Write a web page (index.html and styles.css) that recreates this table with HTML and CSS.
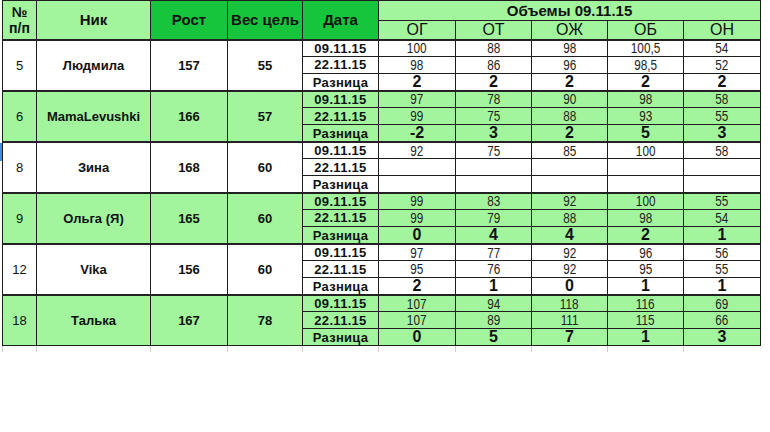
FILE: index.html
```html
<!DOCTYPE html>
<html lang="ru">
<head>
<meta charset="utf-8">
<title>Объемы</title>
<link rel="stylesheet" href="styles.css">
</head>
<body>
<div class="sheet">
<table class="tbl">
  <colgroup>
    <col style="width:34px"><col style="width:114px"><col style="width:77px"><col style="width:75px"><col style="width:76px">
    <col style="width:77px"><col style="width:76px"><col style="width:76px"><col style="width:76px"><col style="width:77px">
  </colgroup>
  <thead>
    <tr class="h1">
      <th rowspan="2" class="lg num-h">№<br>п/п</th>
      <th rowspan="2" class="lg">Ник</th>
      <th rowspan="2" class="dg">Рост</th>
      <th rowspan="2" class="dg">Вес цель</th>
      <th rowspan="2" class="dg">Дата</th>
      <th colspan="5" class="lg vol">Объемы 09.11.15</th>
    </tr>
    <tr class="h2">
      <th class="lg m">ОГ</th><th class="lg m">ОТ</th><th class="lg m">ОЖ</th><th class="lg m">ОБ</th><th class="lg m">ОН</th>
    </tr>
  </thead>
  <tbody class="grp w">
    <tr class="r1"><td rowspan="3" class="no">5</td><td rowspan="3" class="nm">Людмила</td><td rowspan="3" class="nm">157</td><td rowspan="3" class="nm">55</td><td class="dt">09.11.15</td><td class="v"><span>100</span></td><td class="v"><span>88</span></td><td class="v"><span>98</span></td><td class="v"><span>100,5</span></td><td class="v"><span>54</span></td></tr>
    <tr class="r2"><td class="dt">22.11.15</td><td class="v"><span>98</span></td><td class="v"><span>86</span></td><td class="v"><span>96</span></td><td class="v"><span>98,5</span></td><td class="v"><span>52</span></td></tr>
    <tr class="r3"><td class="dt">Разница</td><td class="d">2</td><td class="d">2</td><td class="d">2</td><td class="d">2</td><td class="d">2</td></tr>
  </tbody>
  <tbody class="grp g">
    <tr class="r1"><td rowspan="3" class="no">6</td><td rowspan="3" class="nm">MamaLevushki</td><td rowspan="3" class="nm">166</td><td rowspan="3" class="nm">57</td><td class="dt">09.11.15</td><td class="v"><span>97</span></td><td class="v"><span>78</span></td><td class="v"><span>90</span></td><td class="v"><span>98</span></td><td class="v"><span>58</span></td></tr>
    <tr class="r2"><td class="dt">22.11.15</td><td class="v"><span>99</span></td><td class="v"><span>75</span></td><td class="v"><span>88</span></td><td class="v"><span>93</span></td><td class="v"><span>55</span></td></tr>
    <tr class="r3"><td class="dt">Разница</td><td class="d">-2</td><td class="d">3</td><td class="d">2</td><td class="d">5</td><td class="d">3</td></tr>
  </tbody>
  <tbody class="grp w">
    <tr class="r1"><td rowspan="3" class="no">8</td><td rowspan="3" class="nm">Зина</td><td rowspan="3" class="nm">168</td><td rowspan="3" class="nm">60</td><td class="dt">09.11.15</td><td class="v"><span>92</span></td><td class="v"><span>75</span></td><td class="v"><span>85</span></td><td class="v"><span>100</span></td><td class="v"><span>58</span></td></tr>
    <tr class="r2"><td class="dt">22.11.15</td><td class="v"></td><td class="v"></td><td class="v"></td><td class="v"></td><td class="v"></td></tr>
    <tr class="r3"><td class="dt">Разница</td><td class="d"></td><td class="d"></td><td class="d"></td><td class="d"></td><td class="d"></td></tr>
  </tbody>
  <tbody class="grp g">
    <tr class="r1"><td rowspan="3" class="no">9</td><td rowspan="3" class="nm">Ольга (Я)</td><td rowspan="3" class="nm">165</td><td rowspan="3" class="nm">60</td><td class="dt">09.11.15</td><td class="v"><span>99</span></td><td class="v"><span>83</span></td><td class="v"><span>92</span></td><td class="v"><span>100</span></td><td class="v"><span>55</span></td></tr>
    <tr class="r2"><td class="dt">22.11.15</td><td class="v"><span>99</span></td><td class="v"><span>79</span></td><td class="v"><span>88</span></td><td class="v"><span>98</span></td><td class="v"><span>54</span></td></tr>
    <tr class="r3"><td class="dt">Разница</td><td class="d">0</td><td class="d">4</td><td class="d">4</td><td class="d">2</td><td class="d">1</td></tr>
  </tbody>
  <tbody class="grp w">
    <tr class="r1"><td rowspan="3" class="no">12</td><td rowspan="3" class="nm">Vika</td><td rowspan="3" class="nm">156</td><td rowspan="3" class="nm">60</td><td class="dt">09.11.15</td><td class="v"><span>97</span></td><td class="v"><span>77</span></td><td class="v"><span>92</span></td><td class="v"><span>96</span></td><td class="v"><span>56</span></td></tr>
    <tr class="r2"><td class="dt">22.11.15</td><td class="v"><span>95</span></td><td class="v"><span>76</span></td><td class="v"><span>92</span></td><td class="v"><span>95</span></td><td class="v"><span>55</span></td></tr>
    <tr class="r3"><td class="dt">Разница</td><td class="d">2</td><td class="d">1</td><td class="d">0</td><td class="d">1</td><td class="d">1</td></tr>
  </tbody>
  <tbody class="grp g">
    <tr class="r1"><td rowspan="3" class="no">18</td><td rowspan="3" class="nm">Талька</td><td rowspan="3" class="nm">167</td><td rowspan="3" class="nm">78</td><td class="dt">09.11.15</td><td class="v"><span>107</span></td><td class="v"><span>94</span></td><td class="v"><span>118</span></td><td class="v"><span>116</span></td><td class="v"><span>69</span></td></tr>
    <tr class="r2"><td class="dt">22.11.15</td><td class="v"><span>107</span></td><td class="v"><span>89</span></td><td class="v"><span>111</span></td><td class="v"><span>115</span></td><td class="v"><span>66</span></td></tr>
    <tr class="r3"><td class="dt">Разница</td><td class="d">0</td><td class="d">5</td><td class="d">7</td><td class="d">1</td><td class="d">3</td></tr>
  </tbody>
</table>
<div class="ticks">
  <span style="width:34px"></span><span style="width:114px"></span><span style="width:77px"></span><span style="width:75px"></span><span style="width:76px"></span><span style="width:77px"></span><span style="width:76px"></span><span style="width:76px"></span><span style="width:76px"></span><span style="width:77px"></span>
</div>
</div>
<div class="sel"></div>
</body>
</html>
```

FILE: styles.css
```css
html, body {
  margin: 0;
  padding: 0;
  background: #fff;
}
body {
  width: 770px;
  height: 432px;
  overflow: hidden;
  position: relative;
  font-family: "Liberation Sans", Arial, sans-serif;
  color: #111;
}
.sheet {
  padding-left: 2px;
}
.tbl {
  border-collapse: collapse;
  table-layout: fixed;
  width: 758px;
}
.tbl th, .tbl td {
  border: 1px solid #1e1e1e;
  padding: 0;
  text-align: center;
  vertical-align: middle;
  overflow: hidden;
  white-space: nowrap;
  line-height: 1;
}
.tbl th {
  font-weight: bold;
  font-size: 15px;
}
.lg { background: #a2f59c; }
.dg { background: #17c53c; }
.h1 { height: 20px; }
.h2 { height: 19px; }
.num-h { font-size: 14px !important; line-height: 16px !important; }
.vol { font-size: 15px; }
.tbl th.m { font-weight: normal; font-size: 16px; }
.grp.g td { background: #a2f59c; }
.grp.w td { background: #fff; }
.grp { border-top: 2px solid #222; }
.r1, .r3 { height: 17px; }
.r2 { height: 16.7px; }
.no { font-size: 13px; }
.nm { font-size: 13px; font-weight: bold; }
.dt { font-size: 13px; font-weight: bold; letter-spacing: 0.3px; }
.r3 .dt { vertical-align: bottom; padding-bottom: 1px; }
.v {
  font-size: 14px;
  color: #222;
}
.v span {
  display: inline-block;
  transform: scaleX(0.84);
}
.d { font-size: 16px; font-weight: bold; }
.ticks {
  display: flex;
  height: 6px;
}
.ticks span {
  border-left: 1px solid #cfcfcf;
  box-sizing: border-box;
}
.sel {
  position: absolute;
  left: 0;
  top: 143px;
  width: 2px;
  height: 18px;
  background: #3a8ee6;
}
```
